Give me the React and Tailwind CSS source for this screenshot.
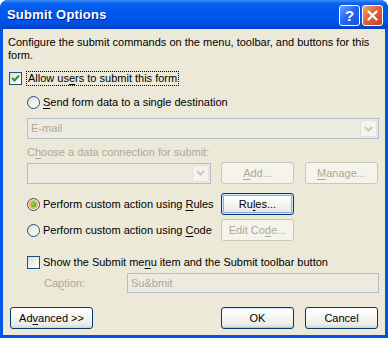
import React from "react";

const U = ({ children }) => <span className="underline underline-offset-[2px]">{children}</span>;

const Check = ({ checked }) => (
  <div className="w-[13px] h-[13px] border border-[#1C5180] bg-[linear-gradient(135deg,#DCDCD7_0%,#F4F4F0_60%,#FFFFFF_100%)] flex items-center justify-center shrink-0">
    {checked && (
      <svg width="9" height="9" viewBox="0 0 9 9">
        <path d="M1 4 L3.5 6.5 L8 1.5" stroke="#21A121" strokeWidth="2" fill="none" />
      </svg>
    )}
  </div>
);

const Radio = ({ on }) => (
  <div className="w-[13px] h-[13px] rounded-full border border-[#1C5180] bg-[linear-gradient(135deg,#DCDCD7_0%,#F4F4F0_60%,#FFFFFF_100%)] flex items-center justify-center shrink-0">
    {on && (
      <div className="w-[9px] h-[9px] rounded-full bg-[#F8B636] flex items-center justify-center">
        <div className="w-[5px] h-[5px] rounded-full bg-[radial-gradient(circle_at_40%_40%,#7BE37B,#21A121)]" />
      </div>
    )}
  </div>
);

const Btn = ({ children, w = "w-[73px]", disabled, def, soft }) => (
  <div
    className={`${w} h-[22px] shrink-0 rounded-[3px] border flex items-center justify-center ${
      disabled
        ? "border-[#C9C7BA] bg-[#F5F4EA] text-[#ACA899]"
        : "border-[#003C74] bg-[linear-gradient(to_bottom,#FFFFFF_0%,#F7F7F4_40%,#ECEBE6_85%,#D6D0C5_100%)] text-black"
    } ${def ? "shadow-[inset_0_0_0_1px_#CEE7FF,inset_0_0_0_2px_#89ADE4]" : ""} ${
      soft ? "shadow-[inset_0_1px_0_#CEE7FF,inset_0_-1px_0_#A9C5EE]" : ""
    }`}
  >
    {children}
  </div>
);

const Combo = ({ w, children }) => (
  <div className={`${w} h-[21px] shrink-0 border border-[#AFBDCC] bg-[#EDEBE0] flex items-center`}>
    <div className="flex-1 pl-[3px] text-[#ACA899]">{children}</div>
    <div className="w-[17px] h-[17px] mr-[1px] rounded-[2px] border border-[#E3E2DA] bg-[#F4F3EE] flex items-center justify-center">
      <svg width="9" height="6" viewBox="0 0 9 6">
        <path d="M1 1 L4.5 4.5 L8 1" stroke="#C9C7BA" strokeWidth="2" fill="none" />
      </svg>
    </div>
  </div>
);

export default function App() {
  return (
    <div
      className="w-[388px] h-[338px] flex flex-col rounded-t-[8px] bg-[#0054E3] text-[11px] text-black overflow-hidden"
      style={{ fontFamily: '"Liberation Sans", Arial, sans-serif' }}
    >
      {/* Title bar */}
      <div className="h-[29px] shrink-0 flex items-center pl-[7px] pr-[5px] bg-[linear-gradient(to_bottom,#3C8CF9_0%,#0A62EE_12%,#0058EE_35%,#0055EB_70%,#0049D6_90%,#003FC4_100%)]">
        <span className="flex-1 text-white font-bold text-[13px] tracking-[0.2px] [text-shadow:1px_1px_0_#0A1883]">
          Submit Options
        </span>
        <div className="flex gap-[2px] mt-[2px]">
          <div className="w-[21px] h-[21px] rounded-[3px] border border-white bg-[linear-gradient(135deg,#6FA0FF_0%,#2A68F0_45%,#1A4FD8_100%)] flex items-center justify-center text-white font-bold text-[15px] leading-none">
            ?
          </div>
          <div className="w-[21px] h-[21px] rounded-[3px] border border-white bg-[linear-gradient(135deg,#F2A283_0%,#E2643A_45%,#C54320_100%)] flex items-center justify-center">
            <svg width="11" height="11" viewBox="0 0 11 11">
              <path d="M1.5 1.5 L9.5 9.5 M9.5 1.5 L1.5 9.5" stroke="white" strokeWidth="2.2" strokeLinecap="round" />
            </svg>
          </div>
        </div>
      </div>

      {/* Client area */}
      <div className="flex-1 mx-[3px] mb-[3px] bg-[#ECE9D8] pt-[7px] pl-[5px] flex flex-col">
        <p className="leading-[13px] h-[26px]">
          Configure the submit commands on the menu, toolbar, and buttons for this
          <br />
          form.
        </p>

        <div className="mt-[9px] h-[15px] flex items-center pl-[1px]">
          <Check checked />
          <span className="ml-[4px] px-[1px] border border-dotted border-black leading-[13px]">
            Allow us<U>e</U>rs to submit this form
          </span>
        </div>

        <div className="mt-[9px] h-[14px] flex items-center pl-[19px] gap-[3px]">
          <Radio />
          <span>
            <U>S</U>end form data to a single destination
          </span>
        </div>

        <div className="mt-[9px] pl-[19px]">
          <Combo w="w-[352px]">E-mail</Combo>
        </div>

        <div className="mt-[7px] h-[13px] leading-[13px] pl-[19px] text-[#ACA899]">
          C<U>h</U>oose a data connection for submit:
        </div>

        <div className="mt-[3px] h-[22px] flex items-center pl-[19px]">
          <Combo w="w-[184px]" />
          <div className="ml-[10px]">
            <Btn disabled>
              <span>
                <U>A</U>dd...
              </span>
            </Btn>
          </div>
          <div className="ml-[11px]">
            <Btn disabled>
              <span>
                <U>M</U>anage...
              </span>
            </Btn>
          </div>
        </div>

        <div className="mt-[9px] h-[22px] flex items-center pl-[19px]">
          <div className="w-[194px] flex items-center gap-[3px]">
            <Radio on />
            <span>
              Perform custom action using <U>R</U>ules
            </span>
          </div>
          <Btn def>
            <span>
              Ru<U>l</U>es...
            </span>
          </Btn>
        </div>

        <div className="mt-[4px] h-[22px] flex items-center pl-[19px]">
          <div className="w-[194px] flex items-center gap-[3px]">
            <Radio />
            <span>
              Perform custom action using <U>C</U>ode
            </span>
          </div>
          <Btn disabled>
            <span>
              Edit Co<U>d</U>e...
            </span>
          </Btn>
        </div>

        <div className="mt-[14px] h-[15px] flex items-center pl-[19px] gap-[3px]">
          <Check />
          <span>
            Show the Submit me<U>n</U>u item and the Submit toolbar button
          </span>
        </div>

        <div className="mt-[3px] h-[20px] flex items-center pl-[36px]">
          <span className="w-[83px] text-[#ACA899]">
            Ca<U>p</U>tion:
          </span>
          <div className="w-[252px] h-[20px] border border-[#AFBDCC] bg-[#EDEBE0] flex items-center pl-[3px] text-[#ACA899]">
            Su&amp;bmit
          </div>
        </div>

        <div className="mt-[14px] h-[22px] flex items-center pl-[2px]">
          <Btn w="w-[83px]">
            <span>
              Ad<U>v</U>anced &gt;&gt;
            </span>
          </Btn>
          <div className="ml-[128px]">
            <Btn soft>OK</Btn>
          </div>
          <div className="ml-[11px]">
            <Btn>Cancel</Btn>
          </div>
        </div>
      </div>
    </div>
  );
}
